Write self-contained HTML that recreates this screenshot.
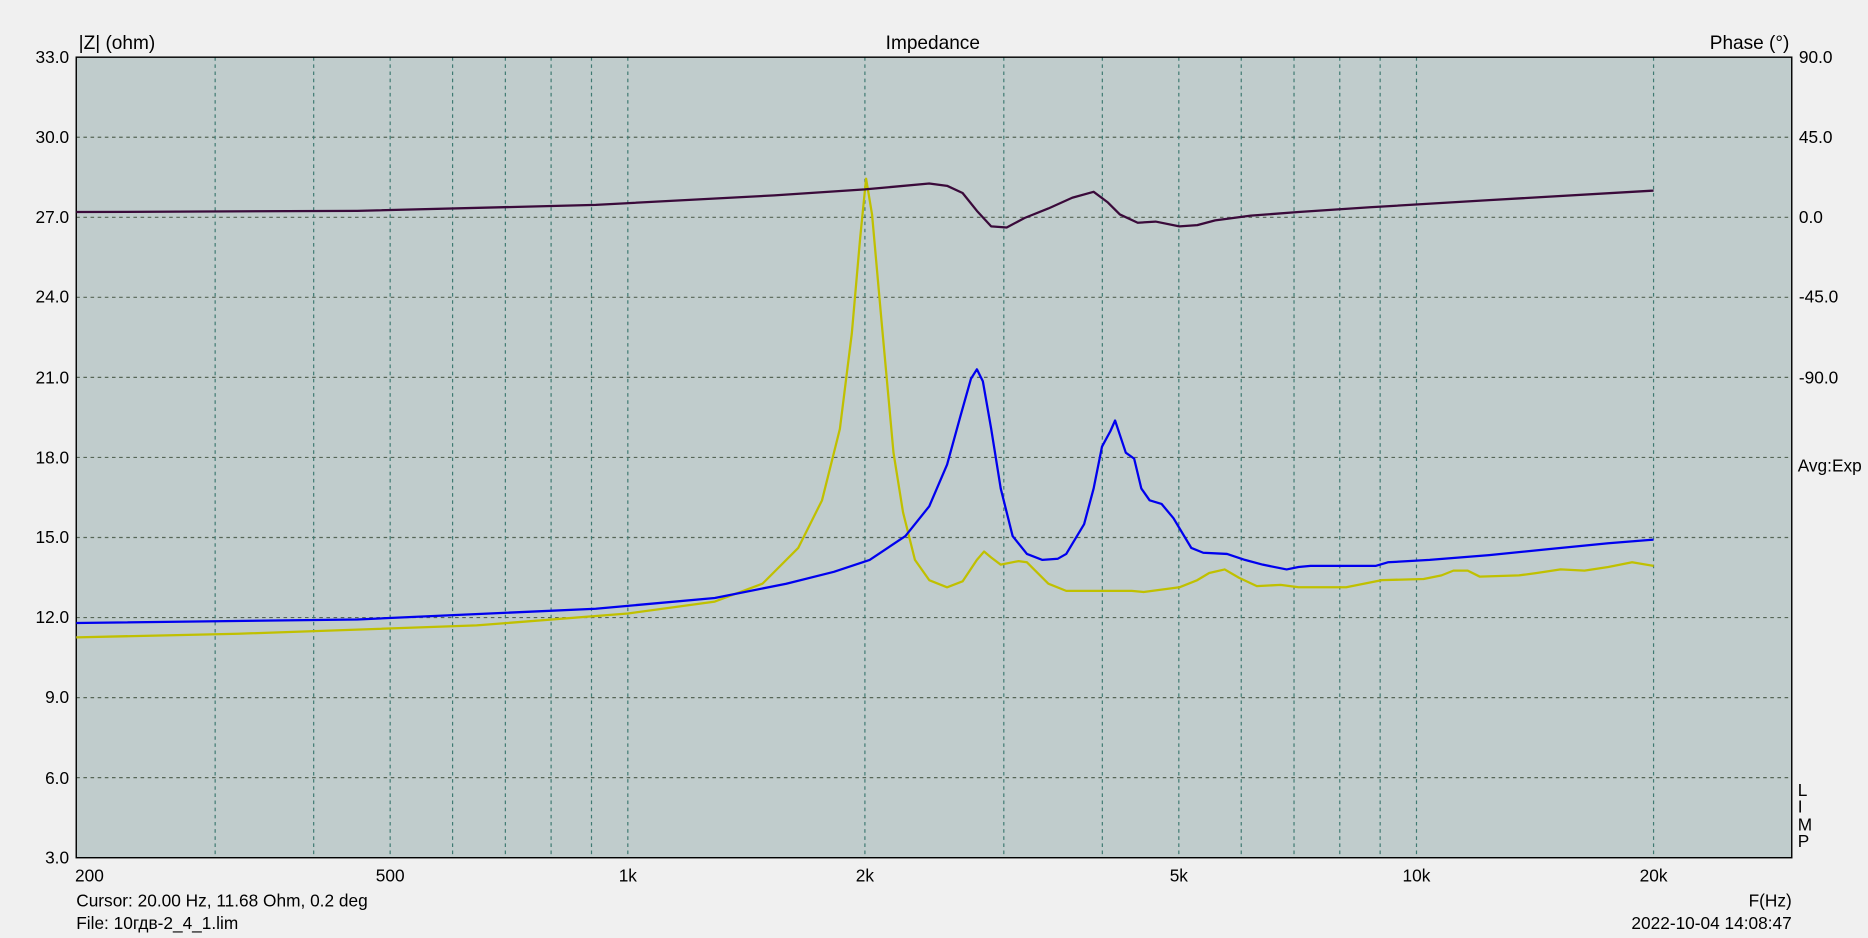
<!DOCTYPE html>
<html><head><meta charset="utf-8"><style>
html,body{margin:0;padding:0;background:#f0f0f0;}
svg{display:block;}
text{font-family:"Liberation Sans",sans-serif;font-size:14.5px;fill:#000;}
.t{font-size:16px;}
</style></head><body>
<svg width="1868" height="938" viewBox="0 0 1568 787.4" preserveAspectRatio="none">
<rect x="0" y="0" width="1568" height="787.4" fill="#f0f0f0"/>
<rect x="64" y="48" width="1440" height="672" fill="#c0cccc"/>
<g stroke="#566656" stroke-width="1" stroke-dasharray="3,3">
<line x1="64" x2="1504" y1="115.2" y2="115.2"/>
<line x1="64" x2="1504" y1="182.4" y2="182.4"/>
<line x1="64" x2="1504" y1="249.6" y2="249.6"/>
<line x1="64" x2="1504" y1="316.8" y2="316.8"/>
<line x1="64" x2="1504" y1="384" y2="384"/>
<line x1="64" x2="1504" y1="451.2" y2="451.2"/>
<line x1="64" x2="1504" y1="518.4" y2="518.4"/>
<line x1="64" x2="1504" y1="585.6" y2="585.6"/>
<line x1="64" x2="1504" y1="652.8" y2="652.8"/>
</g>
<g stroke="#3f7a72" stroke-width="1" stroke-dasharray="3,3">
<line y1="48" y2="720" x1="180.6" x2="180.6"/>
<line y1="48" y2="720" x1="263.3" x2="263.3"/>
<line y1="48" y2="720" x1="327.5" x2="327.5"/>
<line y1="48" y2="720" x1="379.9" x2="379.9"/>
<line y1="48" y2="720" x1="424.2" x2="424.2"/>
<line y1="48" y2="720" x1="462.6" x2="462.6"/>
<line y1="48" y2="720" x1="496.5" x2="496.5"/>
<line y1="48" y2="720" x1="527" x2="527"/>
<line y1="48" y2="720" x1="726" x2="726"/>
<line y1="48" y2="720" x1="842.6" x2="842.6"/>
<line y1="48" y2="720" x1="925.3" x2="925.3"/>
<line y1="48" y2="720" x1="989.5" x2="989.5"/>
<line y1="48" y2="720" x1="1041.9" x2="1041.9"/>
<line y1="48" y2="720" x1="1086.2" x2="1086.2"/>
<line y1="48" y2="720" x1="1124.6" x2="1124.6"/>
<line y1="48" y2="720" x1="1158.5" x2="1158.5"/>
<line y1="48" y2="720" x1="1189" x2="1189"/>
<line y1="48" y2="720" x1="1388" x2="1388"/>
</g>
<rect x="64" y="48" width="1440" height="672" fill="none" stroke="#000" stroke-width="1.2"/>
<g fill="none" stroke-width="1.9" stroke-linejoin="round">
<polyline stroke="#c0c000" points="64,535 200,532 400,525 527,515 600,505 640,490 670,460 690,420 705,360 715,280 722,200 727,150 732,180 740,270 750,380 758,430 768,470 780,487 795,493 808,488 820,470 826,463 832,468 840,474 855,471 862,472 870,480 880,490 895,496 920,496 950,496 960,497 990,493 1005,487 1015,481 1028,478 1040,485 1055,492 1075,491 1090,493 1130,493 1160,487 1195,486 1210,483 1220,479 1232,479 1242,484 1275,483 1290,481 1310,478 1330,479 1350,476 1370,472 1388,475"/>
<polyline stroke="#0000ee" points="64,523 300,520 500,511 600,502 660,490 700,480 730,470 760,450 780,425 795,390 806,350 815,318 820,310 825,320 832,360 840,410 850,450 862,465 875,470 888,469 895,465 910,440 918,410 925,375 932,362 936,353 940,365 945,380 952,385 958,410 965,420 975,423 985,435 1000,460 1010,464 1030,465 1045,470 1060,474 1080,478 1090,476 1100,475 1155,475 1165,472 1200,470 1250,466 1300,461 1350,456 1388,453"/>
<polyline stroke="#3a0a3a" points="64,178 300,177 500,172 650,164 726,159 780,154 795,156 808,162 820,177 832,190 845,191 860,183 880,175 900,166 918,161 930,170 940,180 955,187 970,186 990,190 1005,189 1020,185 1050,181 1090,178 1150,174 1250,168 1388,160"/>
</g>
<text class="t" x="66" y="41">|Z| (ohm)</text>
<text class="t" x="783" y="41" text-anchor="middle">Impedance</text>
<text class="t" x="1502" y="41" text-anchor="end">Phase (°)</text>
<g text-anchor="end">
<text x="58" y="53">33.0</text><text x="58" y="120">30.0</text><text x="58" y="187">27.0</text><text x="58" y="254">24.0</text><text x="58" y="322">21.0</text><text x="58" y="389">18.0</text><text x="58" y="456">15.0</text><text x="58" y="523">12.0</text><text x="58" y="590">9.0</text><text x="58" y="658">6.0</text><text x="58" y="725">3.0</text>
</g>
<text x="1510" y="53">90.0</text><text x="1510" y="120">45.0</text><text x="1510" y="187">0.0</text><text x="1510" y="254">-45.0</text><text x="1510" y="322">-90.0</text>
<text x="1509" y="396">Avg:Exp</text>
<text x="1509" y="668">L</text><text x="1509" y="682">I</text><text x="1509" y="697">M</text><text x="1509" y="711">P</text>
<text x="63" y="740">200</text>
<g text-anchor="middle">
<text x="327.5" y="740">500</text><text x="527" y="740">1k</text><text x="726" y="740">2k</text><text x="989.5" y="740">5k</text><text x="1189" y="740">10k</text><text x="1388" y="740">20k</text>
</g>
<text x="64" y="761">Cursor: 20.00 Hz, 11.68 Ohm, 0.2 deg</text>
<text x="64" y="780">File: 10гдв-2_4_1.lim</text>
<text x="1504" y="761" text-anchor="end">F(Hz)</text>
<text x="1504" y="780" text-anchor="end">2022-10-04 14:08:47</text>
</svg>
</body></html>
